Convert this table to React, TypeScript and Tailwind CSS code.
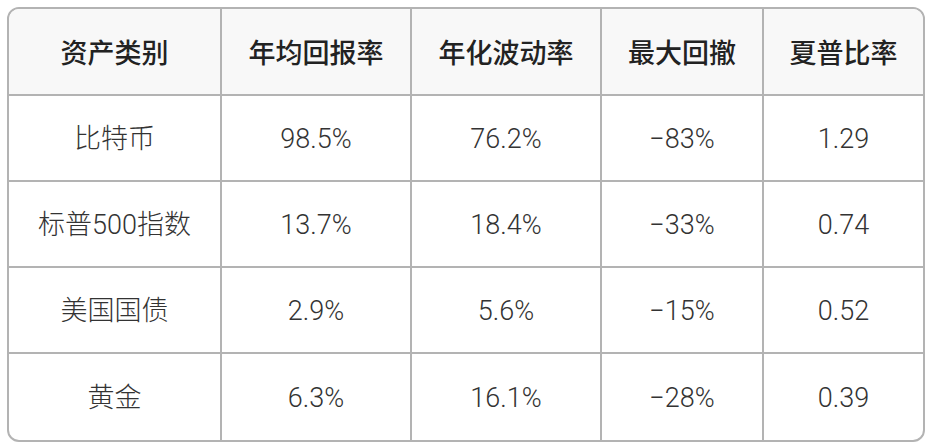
const headers = ["资产类别", "年均回报率", "年化波动率", "最大回撤", "夏普比率"];

const rows = [
  ["比特币", "98.5%", "76.2%", "−83%", "1.29"],
  ["标普500指数", "13.7%", "18.4%", "−33%", "0.74"],
  ["美国国债", "2.9%", "5.6%", "−15%", "0.52"],
  ["黄金", "6.3%", "16.1%", "−28%", "0.39"],
];

const widths = ["w-[213px]", "w-[190px]", "w-[190px]", "w-[162px]", "w-[159px]"];

export default function App() {
  return (
    <div className="bg-white w-[934px] h-[444px] p-[7px]">
      <div className="w-[918px] rounded-[12px] border-2 border-[#b3b3b3] overflow-hidden">
        <table className="w-full border-separate border-spacing-0 table-fixed">
          <thead>
            <tr className="bg-[#f8f8f8]">
              {headers.map((h, i) => (
                <th
                  key={h}
                  className={`${widths[i]} h-[87px] pt-[2px] border-b-2 border-[#b3b3b3] ${i < 4 ? "border-r-2" : ""} text-center text-[27px] font-medium text-[#222] font-['Noto_Sans_CJK_SC',sans-serif]`}
                >
                  {h}
                </th>
              ))}
            </tr>
          </thead>
          <tbody>
            {rows.map((r, ri) => (
              <tr key={r[0]}>
                {r.map((c, ci) => (
                  <td
                    key={ci}
                    className={`h-[86px] pt-[2px] border-[#b3b3b3] ${ri < 3 ? "border-b-2" : ""} ${ci < 4 ? "border-r-2" : ""} text-center text-[27px] font-light text-[#333] font-['Roboto','Noto_Sans_CJK_SC',sans-serif]`}
                  >
                    {c}
                  </td>
                ))}
              </tr>
            ))}
          </tbody>
        </table>
      </div>
    </div>
  );
}
